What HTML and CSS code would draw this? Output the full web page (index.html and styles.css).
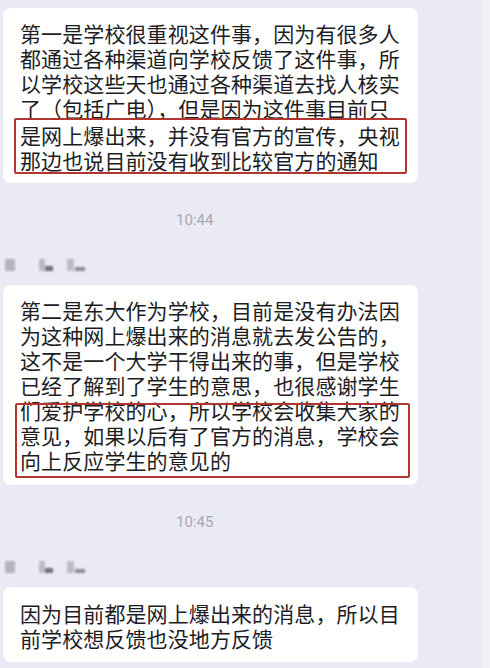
FILE: index.html
```html
<!DOCTYPE html>
<html lang="zh-CN">
<head>
  <meta charset="UTF-8">
  <meta name="viewport" content="width=device-width, initial-scale=1.0">
  <title>聊天记录</title>
  <link rel="stylesheet" href="styles.css">
</head>
<body>
  <div class="page">
    <div class="chat">
      <div class="bubble first">
        <p>第一是学校很重视这件事，因为有很多人<br>都通过各种渠道向学校反馈了这件事，所<br>以学校这些天也通过各种渠道去找人核实<br>了（包括广电），但是因为这件事目前只</p>
        <p class="mark">是网上爆出来，并没有官方的宣传，央视<br>那边也说目前没有收到比较官方的通知</p>
      </div>

      <div class="time">10:44</div>
      <div class="name">
        <span class="blot b1"></span>
        <span class="blot b2"></span><span class="blot b2s"></span>
        <span class="blot b3"></span><span class="blot b3s"></span>
      </div>

      <div class="bubble second">
        <p>第二是东大作为学校，目前是没有办法因<br>为这种网上爆出来的消息就去发公告的，<br>这不是一个大学干得出来的事，但是学校<br>已经了解到了学生的意思，也很感谢学生</p>
        <p class="mark">们爱护学校的心，所以学校会收集大家的<br>意见，如果以后有了官方的消息，学校会<br>向上反应学生的意见的</p>
      </div>

      <div class="time">10:45</div>
      <div class="name">
        <span class="blot b1"></span>
        <span class="blot b2"></span><span class="blot b2s"></span>
        <span class="blot b3"></span><span class="blot b3s"></span>
      </div>

      <div class="bubble third">
        <p>因为目前都是网上爆出来的消息，所以目<br>前学校想反馈也没地方反馈</p>
      </div>
    </div>
    <div class="edge"></div>
  </div>
</body>
</html>
```

FILE: styles.css
```css
* {
  margin: 0;
  padding: 0;
  box-sizing: border-box;
}

body {
  width: 490px;
  height: 668px;
  overflow: hidden;
  background: #eaeaf4;
  font-family: "Noto Sans CJK SC", "Noto Sans", sans-serif;
  color: #1d1d1f;
}

.page {
  display: flex;
  height: 668px;
}

.chat {
  width: 482px;
  padding-top: 8px;
}

.edge {
  flex: 1;
  background: #f1f1f6;
}

/* message bubbles */
.bubble {
  width: 415px;
  margin-left: 3px;
  background: #fff;
  border-radius: 8px;
  padding: 13px 11px 10px 17px;
  font-size: 21px;
  line-height: 25px;
  letter-spacing: 0.1px;
  white-space: nowrap;
}

.bubble p {
  width: 387px;
}

.mark {
  position: relative;
  margin-top: 2px;
}

.mark::after {
  content: "";
  position: absolute;
  top: -5px;
  bottom: -1px;
  left: -6px;
  right: 0;
  border: 2px solid #b2352f;
  border-radius: 2px;
}

.second {
  padding-bottom: 12px;
}

.second .mark {
  margin-top: 0;
}

.second .mark::after {
  top: 5px;
  bottom: -5px;
  left: -5px;
  right: -3px;
}

.third {
  padding-top: 14px;
  padding-bottom: 11px;
}

/* timestamps */
.time {
  margin-top: 28px;
  padding-left: 176px;
  font-family: Roboto, "Noto Sans", sans-serif;
  font-size: 15px;
  line-height: 18px;
  color: #a7a7b3;
}

/* blurred sender name */
.name {
  display: flex;
  align-items: flex-end;
  height: 12px;
  margin: 30px 0 14px 5px;
}

.blot {
  display: block;
  background: #9d9da8;
  filter: blur(0.8px);
}

.b1 {
  width: 10px;
  height: 12px;
  opacity: 0.7;
}

.b2 {
  width: 6px;
  height: 12px;
  margin-left: 24px;
  opacity: 0.6;
}

.b2s {
  width: 8px;
  height: 5px;
  background: #6f6f7a;
}

.b3 {
  width: 7px;
  height: 12px;
  margin-left: 14px;
  opacity: 0.6;
}

.b3s {
  width: 10px;
  height: 4px;
  margin-left: 1px;
  background: #8a8a96;
}
```
